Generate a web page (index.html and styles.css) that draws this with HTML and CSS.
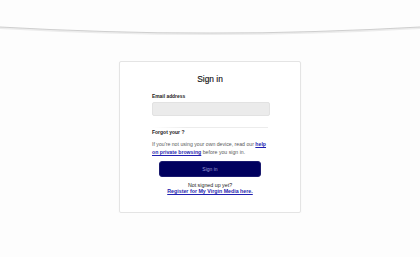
FILE: index.html
```html
<!DOCTYPE html>
<html lang="en">
<head>
<meta charset="utf-8">
<title>Sign in</title>
<link rel="stylesheet" href="styles.css">
</head>
<body>
<header class="masthead">
  <svg class="curve" width="420" height="36" viewBox="0 0 420 36" aria-hidden="true">
    <path d="M0 28 Q210 40 420 28" fill="none" stroke="#ececec" stroke-width="2"/>
    <path d="M0 27 Q210 39 420 27" fill="none" stroke="#cfcfcf" stroke-width="1.2"/>
  </svg>
</header>
<main class="page">
  <section class="card">
    <h1 class="title">Sign in</h1>
    <label class="label" for="email">Email address</label>
    <input class="field" id="email" type="email">
    <div class="divider"></div>
    <p class="forgot">Forgot your ?</p>
    <p class="note">If you're not using your own device, read our <a class="link" href="#">help on private browsing</a> before you sign in.</p>
    <button class="btn" type="button">Sign in</button>
    <p class="signup">Not signed up yet?<br><a class="link" href="#">Register for My Virgin Media here.</a></p>
  </section>
</main>
</body>
</html>
```
FILE: styles.css
```css
html, body {
  margin: 0;
  padding: 0;
  background: #fdfdfd;
  font-family: "Liberation Sans", Arial, sans-serif;
  color: #222;
}
.masthead {
  height: 36px;
}
.curve {
  display: block;
}
.page {
  display: flex;
  justify-content: center;
  padding-top: 25px;
}
.card {
  box-sizing: border-box;
  width: 182px;
  height: 152px;
  background: #fff;
  border: 1px solid #e4e4e4;
  border-radius: 2px;
  box-shadow: 0 1px 2px rgba(0,0,0,0.04);
  padding: 12px 32px 0;
  display: flex;
  flex-direction: column;
}
.title {
  margin: 0;
  font-size: 8.4px;
  line-height: 10px;
  font-weight: 400;
  text-align: center;
  color: #111;
  -webkit-text-stroke: 0.15px #111;
}
.label {
  margin-top: 10px;
  font-size: 4.9px;
  line-height: 6px;
  font-weight: 700;
  color: #222;
}
.field {
  box-sizing: border-box;
  margin: 2px 0 0;
  width: 118px;
  height: 14px;
  padding: 0;
  background: #ebebeb;
  border: 1px solid #e2e2e2;
  border-radius: 2px;
}
.divider {
  margin-top: 11px;
  height: 1px;
  background: linear-gradient(to right, rgba(235,235,235,0) 0%, #ececec 30%, #ececec 100%);
}
.forgot {
  margin: 0;
  padding-top: 1px;
  font-size: 5px;
  line-height: 6px;
  font-weight: 700;
  color: #222;
}
.note {
  margin: 5px -3px 0 0;
  font-size: 5.2px;
  line-height: 8px;
  color: #5a5a5a;
}
.link {
  color: #1f1fb0;
  font-weight: 700;
  text-decoration: underline;
}
.btn {
  align-self: center;
  margin-top: 5px;
  width: 102px;
  height: 16px;
  padding: 0;
  background: #00005e;
  border: 1px solid #1a1a6e;
  border-radius: 3px;
  color: #9c9cd8;
  font-family: "Liberation Sans", Arial, sans-serif;
  font-size: 5px;
  line-height: 14px;
}
.signup {
  margin: 5px 0 0;
  font-size: 5.3px;
  line-height: 6px;
  text-align: center;
  color: #222;
}
```
